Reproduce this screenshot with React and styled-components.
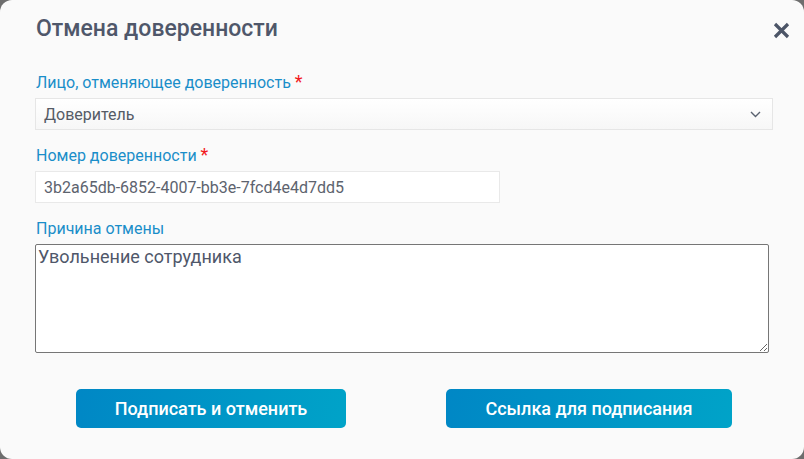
import styled, { createGlobalStyle } from 'styled-components';
import { useState } from 'react';

const GlobalStyle = createGlobalStyle`
    html, body {
        margin: 0;
        padding: 0;
        background: #6e6e6e;
        font-family: Roboto, 'Noto Sans', sans-serif;
    }
`;

function App() {
    const [person, setPerson] = useState('Доверитель');
    const [number, setNumber] = useState('3b2a65db-6852-4007-bb3e-7fcd4e4d7dd5');
    const [reason, setReason] = useState('Увольнение сотрудника');

    return (
        <>
            <GlobalStyle />
            <Modal>
                <Header>
                    <Title>Отмена доверенности</Title>
                    <CloseBt type="button" aria-label="Закрыть">
                        <svg width="17" height="17" viewBox="0 0 17 17">
                            <path
                                d="M2 2 L15 15 M15 2 L2 15"
                                stroke="#4c5567"
                                strokeWidth="3.2"
                                strokeLinecap="butt"
                            />
                        </svg>
                    </CloseBt>
                </Header>

                <Field $top={33}>
                    <Label>
                        Лицо, отменяющее доверенность <Star>*</Star>
                    </Label>
                    <SelectBox>
                        <SelectValue>{person}</SelectValue>
                        <svg width="11" height="7" viewBox="0 0 11 7">
                            <path d="M1 1 L5.5 5.5 L10 1" fill="none" stroke="#5a6270" strokeWidth="1.4" />
                        </svg>
                        <HiddenSelect value={person} onChange={(e) => setPerson(e.target.value)}>
                            <option>Доверитель</option>
                            <option>Доверенное лицо</option>
                        </HiddenSelect>
                    </SelectBox>
                </Field>

                <Field $top={17}>
                    <Label>
                        Номер доверенности <Star>*</Star>
                    </Label>
                    <TextInput value={number} onChange={(e) => setNumber(e.target.value)} />
                </Field>

                <Field $top={17}>
                    <Label>Причина отмены</Label>
                    <Reason value={reason} onChange={(e) => setReason(e.target.value)} />
                </Field>

                <Buttons>
                    <ActionBt type="button" $width={270}>
                        Подписать и отменить
                    </ActionBt>
                    <ActionBt type="button" $width={286}>
                        Ссылка для подписания
                    </ActionBt>
                </Buttons>
            </Modal>
        </>
    );
}
export default App;

const Modal = styled.div`
    box-sizing: border-box;
    width: 804px;
    height: 459px;
    background: #fafafa;
    border-radius: 12px;
    padding: 17px 32px 0 35px;
    display: flex;
    flex-direction: column;
    overflow: hidden;
`;

const Header = styled.div`
    display: flex;
    justify-content: space-between;
    align-items: center;
    height: 24px;
`;

const Title = styled.h2`
    margin: 0 0 0 1px;
    font-size: 23px;
    line-height: 24px;
    font-weight: 500;
    color: #4f576a;
`;

const CloseBt = styled.button`
    border: 0;
    padding: 0;
    background: none;
    display: flex;
    margin-right: -18px;
    margin-top: 2px;
    cursor: pointer;
`;

const Field = styled.div`
    display: flex;
    flex-direction: column;
    gap: 6px;
    margin-top: ${(p) => p.$top}px;
`;

const Label = styled.label`
    font-size: 16px;
    line-height: 18px;
    height: 18px;
    color: #1a8ec9;
    margin-left: 1px;
`;

const Star = styled.span`
    color: #f2191e;
    font-size: 18px;
    line-height: 0;
`;

const SelectBox = styled.div`
    position: relative;
    box-sizing: border-box;
    width: 738px;
    height: 32px;
    border: 1px solid #e6e6e6;
    background: linear-gradient(#ffffff, #f7f7f7);
    display: flex;
    align-items: center;
    justify-content: space-between;
    padding: 0 11px 0 8px;
`;

const SelectValue = styled.span`
    font-size: 16px;
    color: #555b66;
`;

const HiddenSelect = styled.select`
    position: absolute;
    inset: 0;
    opacity: 0;
    cursor: pointer;
`;

const TextInput = styled.input`
    box-sizing: border-box;
    width: 465px;
    height: 32px;
    border: 1px solid #e9e9e9;
    background: #ffffff;
    padding: 0 8px;
    font-family: Roboto, sans-serif;
    font-size: 16px;
    color: #5d636e;
    &:focus {
        outline: none;
    }
`;

const Reason = styled.textarea`
    box-sizing: border-box;
    width: 734px;
    height: 109px;
    border: 1px solid #767676;
    border-radius: 2px;
    background: #ffffff;
    padding: 1px 2px;
    font-family: Roboto, sans-serif;
    font-size: 18px;
    line-height: 22px;
    color: #4f576a;
    &:focus {
        outline: none;
    }
`;

const Buttons = styled.div`
    display: flex;
    gap: 100px;
    padding-left: 41px;
    margin-top: 36px;
`;

const ActionBt = styled.button`
    width: ${(p) => p.$width}px;
    height: 39px;
    border: 0;
    border-radius: 5px;
    background: linear-gradient(100deg, #0087c5 0%, #00a3c8 100%);
    color: #ffffff;
    font-family: Roboto, sans-serif;
    font-size: 18px;
    font-weight: 500;
    cursor: pointer;
`;
